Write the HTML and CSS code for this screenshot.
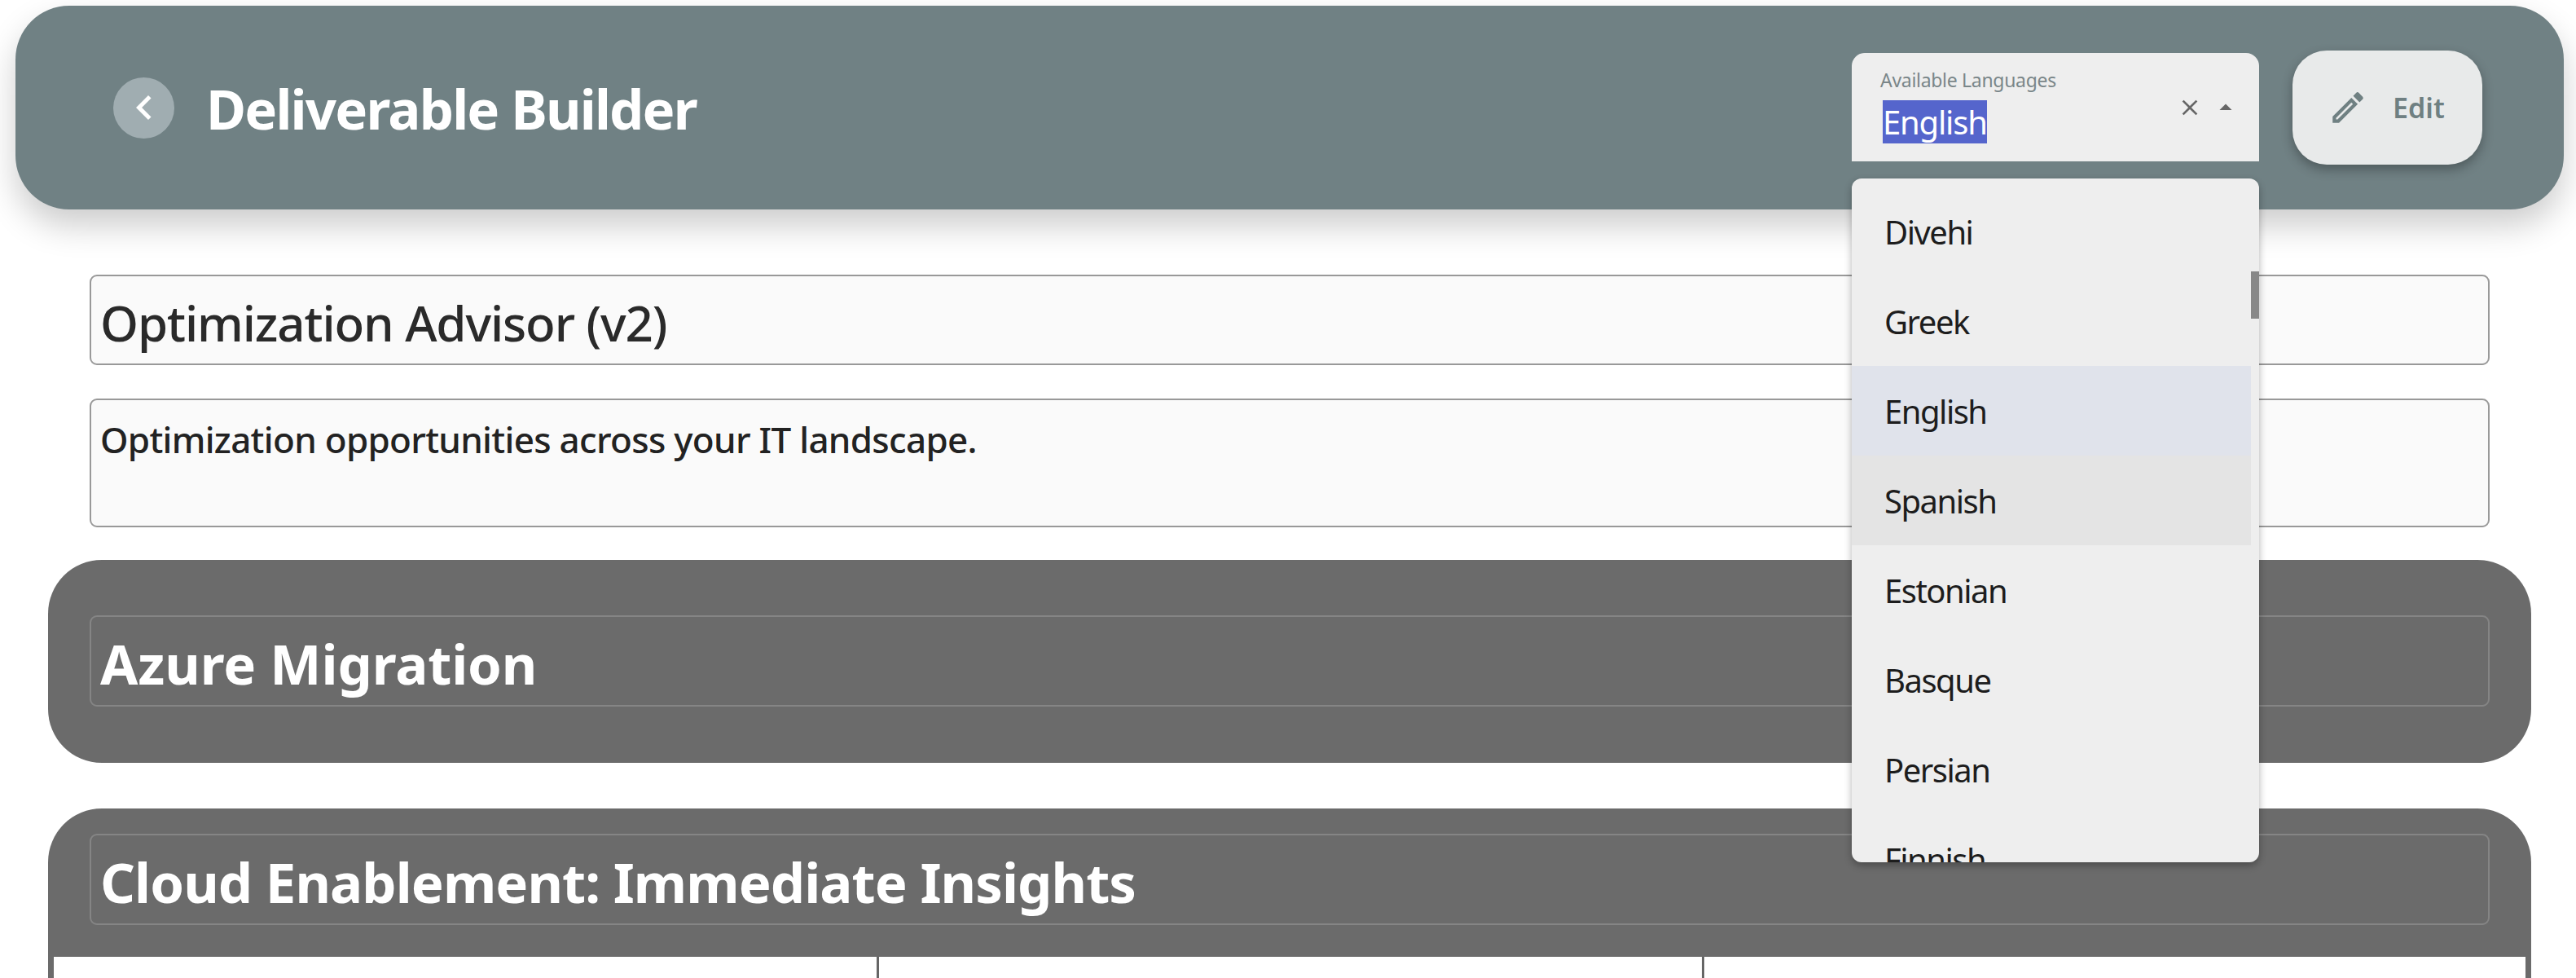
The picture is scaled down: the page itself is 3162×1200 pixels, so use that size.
FILE: index.html
```html
<!DOCTYPE html>
<html lang="en">
<head>
<meta charset="utf-8">
<title>Deliverable Builder</title>
<link rel="stylesheet" href="styles.css">
</head>
<body>
<div class="page">
  <header class="topbar">
    <div class="topbar-left">
      <button class="back" aria-label="Back">
        <svg viewBox="0 0 24 24" class="back-icon"><path d="M15.41 7.41 14 6l-6 6 6 6 1.41-1.41L10.83 12z"/></svg>
      </button>
      <h1 class="page-title">Deliverable Builder</h1>
    </div>
    <div class="topbar-right">
      <div class="lang-select">
        <div class="lang-field">
          <span class="lang-label">Available Languages</span>
          <span class="lang-value"><span class="lang-selected">English</span></span>
        </div>
        <div class="lang-icons">
          <svg viewBox="0 0 24 24" class="clear-icon"><path d="M19 6.41 17.59 5 12 10.59 6.41 5 5 6.41 10.59 12 5 17.59 6.41 19 12 13.41 17.59 19 19 17.59 13.41 12z"/></svg>
          <svg viewBox="0 0 24 24" class="arrow-icon"><path d="m7 14 5-5 5 5z"/></svg>
        </div>
        <div class="lang-menu">
          <ul class="lang-list">
            <li class="lang-item">Divehi</li>
            <li class="lang-item">Greek</li>
            <li class="lang-item is-selected">English</li>
            <li class="lang-item is-hover">Spanish</li>
            <li class="lang-item">Estonian</li>
            <li class="lang-item">Basque</li>
            <li class="lang-item">Persian</li>
            <li class="lang-item">Finnish</li>
          </ul>
          <div class="lang-scroll"></div>
        </div>
      </div>
      <button class="edit-btn">
        <svg viewBox="0 0 24 24" class="edit-icon"><path d="M3 17.25V21h3.75L17.81 9.94l-3.75-3.75L3 17.25zM5.92 19H5v-.92l9.06-9.06.92.92L5.92 19zM20.71 7.04a1 1 0 0 0 0-1.41l-2.34-2.34a1 1 0 0 0-1.41 0l-1.83 1.83 3.75 3.75 1.83-1.83z"/></svg>
        <span>Edit</span>
      </button>
    </div>
  </header>

  <main class="content">
    <div class="field field-title">Optimization Advisor (v2)</div>
    <div class="field field-desc">Optimization opportunities across your IT landscape.</div>

    <section class="section section-azure">
      <div class="section-head">Azure Migration</div>
    </section>

    <section class="section section-cloud">
      <div class="section-head">Cloud Enablement: Immediate Insights</div>
      <div class="table">
        <div class="cell"></div>
        <div class="cell"></div>
        <div class="cell"></div>
      </div>
    </section>
  </main>
</div>
</body>
</html>
```

FILE: styles.css
```css
* { box-sizing: border-box; }
html, body { margin: 0; padding: 0; background: #fff; }
body { font-family: "Noto Sans", "Open Sans", sans-serif; color: #222; }
.page { height: 1200px; overflow: hidden; padding-top: 7px; }

.topbar {
  height: 250px;
  margin: 0 15px 0 19px;
  padding: 0 100px 0 120px;
  border-radius: 66px;
  background: #708184;
  box-shadow: 0 20px 40px rgba(0,0,0,.2);
  display: flex;
  align-items: center;
  justify-content: space-between;
  position: relative;
  z-index: 2;
}
.topbar-left { display: flex; align-items: center; gap: 39px; }
.back {
  width: 75px; height: 75px; border: 0; padding: 0;
  border-radius: 50%;
  background: #a0adb1;
  display: flex; align-items: center; justify-content: center;
}
.back-icon { width: 60px; height: 60px; fill: #fff; }
.page-title { margin: 2px 0 0; font-size: 67px; font-weight: 700; color: #fff; letter-spacing: -1.8px; line-height: 1; }

.topbar-right { display: flex; align-items: flex-start; gap: 41px; }
.lang-select {
  position: relative;
  width: 500px; height: 133px;
  margin-top: 3px;
  background: #eee;
  border-radius: 16px 16px 0 0;
  display: flex; justify-content: space-between;
}
.lang-field { padding: 18px 0 0 35px; display: flex; flex-direction: column; }
.lang-label { font-size: 23px; line-height: 30px; color: #7a8689; letter-spacing: -.3px; }
.lang-value { font-size: 40px; line-height: 53px; margin: 10px 0 0 3px; letter-spacing: -1.2px; }
.lang-selected { display: inline-block; background: #5565cc; color: #fff; }
.lang-icons { display: flex; align-items: center; gap: 10px; padding: 0 23px 0 0; height: 133px; }
.clear-icon { width: 32px; height: 32px; fill: #666; }
.arrow-icon { width: 36px; height: 36px; fill: #666; }

.lang-menu {
  position: absolute; left: 0; right: 0; top: 154px;
  height: 839px;
  overflow: hidden;
  background: #eee;
  border-radius: 12px;
  box-shadow: 0 4px 10px rgba(0,0,0,.3);
  padding-top: 10px;
  z-index: 5;
}
.lang-list { list-style: none; margin: 0 10px 0 0; padding: 0; }
.lang-item {
  height: 110px;
  padding-left: 40px;
  display: flex; align-items: center;
  font-size: 40px; color: #1d1d1d; letter-spacing: -1.5px;
}
.is-selected { background: #e0e3eb; }
.is-hover { background: #e4e4e4; }
.lang-scroll { position: absolute; right: 0; top: 114px; width: 10px; height: 58px; background: #888; }

.edit-btn {
  width: 233px; height: 140px; border: 0; padding: 0 0 0 43px;
  border-radius: 42px;
  background: #e8eaea;
  box-shadow: 0 6px 14px rgba(0,0,0,.3);
  display: flex; align-items: center; justify-content: flex-start; gap: 30px;
  font: 600 34px "Noto Sans", sans-serif; color: #6f8082;
}
.edit-icon { width: 50px; height: 50px; fill: #6f8082; }

.content { padding: 80px 55px 0 59px; display: flex; flex-direction: column; }
.field {
  margin: 0 51px 0 51px;
  border: 2px solid #999;
  border-radius: 9px;
  background: #fafafa;
  padding-left: 11px;
}
.field-title { height: 111px; margin-bottom: 41px; padding-top: 7px; font-size: 60px; line-height: 101px; font-weight: 500; letter-spacing: -1.1px; color: #2a2a2a; }
.field-desc { height: 158px; margin-bottom: 40px; padding-top: 6px; font-size: 44px; line-height: 84px; font-weight: 500; letter-spacing: -.7px; }

.section { background: #6b6b6b; border-radius: 66px; color: #fff; }
.section-azure { height: 249px; padding-top: 68px; margin-bottom: 56px; }
.section-cloud { border-radius: 66px 66px 0 0; height: 400px; padding-top: 31px; }
.section-head {
  height: 112px;
  margin: 0 51px;
  border: 2px solid rgba(255,255,255,.18);
  border-radius: 9px;
  padding: 7px 0 0 11px;
  font-size: 67px; font-weight: 700; line-height: 100px; letter-spacing: -.9px;
}
.section-azure .section-head { letter-spacing: -.1px; }
.table {
  margin: 39px 7px 0;
  height: 200px;
  background: #fff;
  display: grid;
  grid-template-columns: 1010px 1013px 1fr;
}
.cell { border-left: 3px solid #666; }
.cell:first-child { border-left: 0; }
```
